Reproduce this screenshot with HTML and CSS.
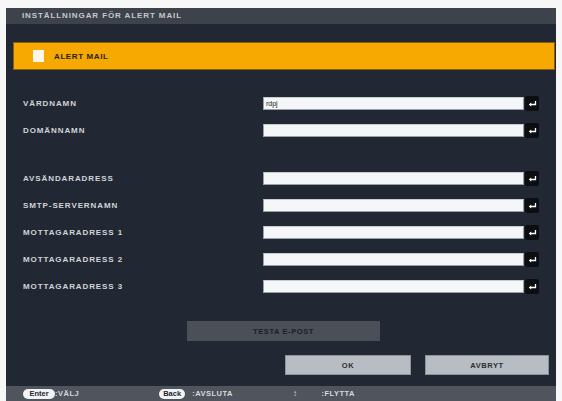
FILE: index.html
```html
<!DOCTYPE html>
<html lang="sv">
<head>
<meta charset="utf-8">
<title>Inställningar för Alert Mail</title>
<link rel="stylesheet" href="styles.css">
</head>
<body>
<div class="panel">
  <div class="header">INSTÄLLNINGAR FÖR ALERT MAIL</div>
  <div class="body">
    <div class="alert-bar">
      <span class="checkbox"></span>
      <span class="alert-label">ALERT MAIL</span>
    </div>

    <div class="row first">
      <span class="label">VÄRDNAMN</span>
      <span class="field">rdpj</span>
      <span class="enter"><svg width="9" height="8" viewBox="0 0 9 8"><path d="M7.5 1 V4.5 H2" fill="none" stroke="#fff" stroke-width="1.3"/><path d="M0.8 4.5 L3.2 2.6 V6.4 Z" fill="#fff"/></svg></span>
    </div>
    <div class="row">
      <span class="label">DOMÄNNAMN</span>
      <span class="field"></span>
      <span class="enter"><svg width="9" height="8" viewBox="0 0 9 8"><path d="M7.5 1 V4.5 H2" fill="none" stroke="#fff" stroke-width="1.3"/><path d="M0.8 4.5 L3.2 2.6 V6.4 Z" fill="#fff"/></svg></span>
    </div>

    <div class="row gap">
      <span class="label">AVSÄNDARADRESS</span>
      <span class="field"></span>
      <span class="enter"><svg width="9" height="8" viewBox="0 0 9 8"><path d="M7.5 1 V4.5 H2" fill="none" stroke="#fff" stroke-width="1.3"/><path d="M0.8 4.5 L3.2 2.6 V6.4 Z" fill="#fff"/></svg></span>
    </div>
    <div class="row">
      <span class="label">SMTP-SERVERNAMN</span>
      <span class="field"></span>
      <span class="enter"><svg width="9" height="8" viewBox="0 0 9 8"><path d="M7.5 1 V4.5 H2" fill="none" stroke="#fff" stroke-width="1.3"/><path d="M0.8 4.5 L3.2 2.6 V6.4 Z" fill="#fff"/></svg></span>
    </div>
    <div class="row">
      <span class="label">MOTTAGARADRESS 1</span>
      <span class="field"></span>
      <span class="enter"><svg width="9" height="8" viewBox="0 0 9 8"><path d="M7.5 1 V4.5 H2" fill="none" stroke="#fff" stroke-width="1.3"/><path d="M0.8 4.5 L3.2 2.6 V6.4 Z" fill="#fff"/></svg></span>
    </div>
    <div class="row">
      <span class="label">MOTTAGARADRESS 2</span>
      <span class="field"></span>
      <span class="enter"><svg width="9" height="8" viewBox="0 0 9 8"><path d="M7.5 1 V4.5 H2" fill="none" stroke="#fff" stroke-width="1.3"/><path d="M0.8 4.5 L3.2 2.6 V6.4 Z" fill="#fff"/></svg></span>
    </div>
    <div class="row">
      <span class="label">MOTTAGARADRESS 3</span>
      <span class="field"></span>
      <span class="enter"><svg width="9" height="8" viewBox="0 0 9 8"><path d="M7.5 1 V4.5 H2" fill="none" stroke="#fff" stroke-width="1.3"/><path d="M0.8 4.5 L3.2 2.6 V6.4 Z" fill="#fff"/></svg></span>
    </div>

    <div class="test-row">
      <div class="btn btn-test">TESTA E-POST</div>
    </div>
    <div class="action-row">
      <div class="btn btn-light btn-ok">OK</div>
      <div class="btn btn-light btn-cancel">AVBRYT</div>
    </div>
  </div>
  <div class="footer">
    <span class="hint hint-enter"><span class="pill pill-enter">Enter</span><span class="hint-text">:VÄLJ</span></span>
    <span class="hint hint-back"><span class="pill pill-back">Back</span><span class="hint-text">:AVSLUTA</span></span>
    <span class="hint hint-move"><span class="arrows">↕</span><span class="hint-text">:FLYTTA</span></span>
  </div>
</div>
</body>
</html>
```

FILE: styles.css
```css
html, body {
  margin: 0;
  padding: 0;
  background: #f7f7f7;
}

body {
  width: 562px;
  height: 401px;
  overflow: hidden;
  font-family: "Liberation Sans", Arial, sans-serif;
}

.panel {
  margin: 8px 0 0 6px;
  width: 550px;
  height: 393px;
  display: flex;
  flex-direction: column;
  background: #232a34;
}

.header {
  height: 16px;
  flex: none;
  background: #3d424b;
  color: #c4c8ce;
  font-size: 8px;
  font-weight: bold;
  letter-spacing: 0.9px;
  line-height: 16px;
  padding-left: 16px;
}

.body {
  flex: 1;
  display: flex;
  flex-direction: column;
  background: #222833;
}

.alert-bar {
  margin: 18px 1px 0 7px;
  height: 26px;
  background: #f6a900;
  border: 1px solid #8a5d12;
  display: flex;
  align-items: center;
}

.checkbox {
  width: 11px;
  height: 12px;
  background: #fbf6ea;
  margin-left: 19px;
}

.alert-label {
  margin-left: 10px;
  color: #2b1f0c;
  font-size: 8px;
  font-weight: bold;
  letter-spacing: 0.6px;
}

.row {
  height: 27px;
  display: flex;
  align-items: center;
}

.row.first {
  margin-top: 20px;
}

.row.gap {
  margin-top: 21px;
}

.label {
  width: 240px;
  padding-left: 17px;
  color: #d0d4d9;
  font-size: 8px;
  font-weight: bold;
  letter-spacing: 0.9px;
}

.field {
  width: 257px;
  height: 11px;
  background: #f5f6f7;
  border: 1px solid #9aa0a8;
  border-top-color: #c8ccd1;
  box-sizing: content-box;
  padding-left: 2px;
  color: #222;
  font-size: 7px;
  line-height: 11px;
}

.enter {
  width: 14px;
  height: 15px;
  margin-left: 1px;
  background: #0c0e12;
  border-radius: 2px;
  display: flex;
  align-items: center;
  justify-content: center;
}

.test-row {
  margin-top: 21px;
  padding-left: 181px;
  display: flex;
}

.btn {
  height: 20px;
  display: flex;
  align-items: center;
  justify-content: center;
  font-size: 7.5px;
  font-weight: bold;
  letter-spacing: 0.6px;
}

.btn-test {
  width: 193px;
  background: #4a4f58;
  color: #1c2027;
}

.action-row {
  margin-top: 14px;
  padding-left: 279px;
  display: flex;
  gap: 14px;
}

.btn-light {
  background: #b8bcc3;
  color: #2a2e35;
  border: 1px solid #8d9299;
  box-sizing: border-box;
}

.btn-ok {
  width: 126px;
}

.btn-cancel {
  width: 124px;
}

.footer {
  height: 15px;
  flex: none;
  background: #4f545d;
  display: flex;
  align-items: center;
  color: #d6d9de;
  font-size: 7.5px;
  font-weight: bold;
  letter-spacing: 0.5px;
}

.hint {
  display: flex;
  align-items: center;
}

.hint-enter {
  margin-left: 17px;
}

.hint-back {
  margin-left: 80px;
}

.hint-move {
  margin-left: 60px;
}

.pill {
  height: 10px;
  border-radius: 5px;
  background: #f2f3f4;
  color: #23272e;
  display: flex;
  align-items: center;
  justify-content: center;
  font-size: 7.5px;
  letter-spacing: 0;
}

.pill-enter {
  width: 32px;
}

.pill-back {
  width: 26px;
  margin-right: 7px;
}

.arrows {
  font-size: 8px;
  margin-right: 24px;
}

.hint-text {
  display: inline-block;
}
```
